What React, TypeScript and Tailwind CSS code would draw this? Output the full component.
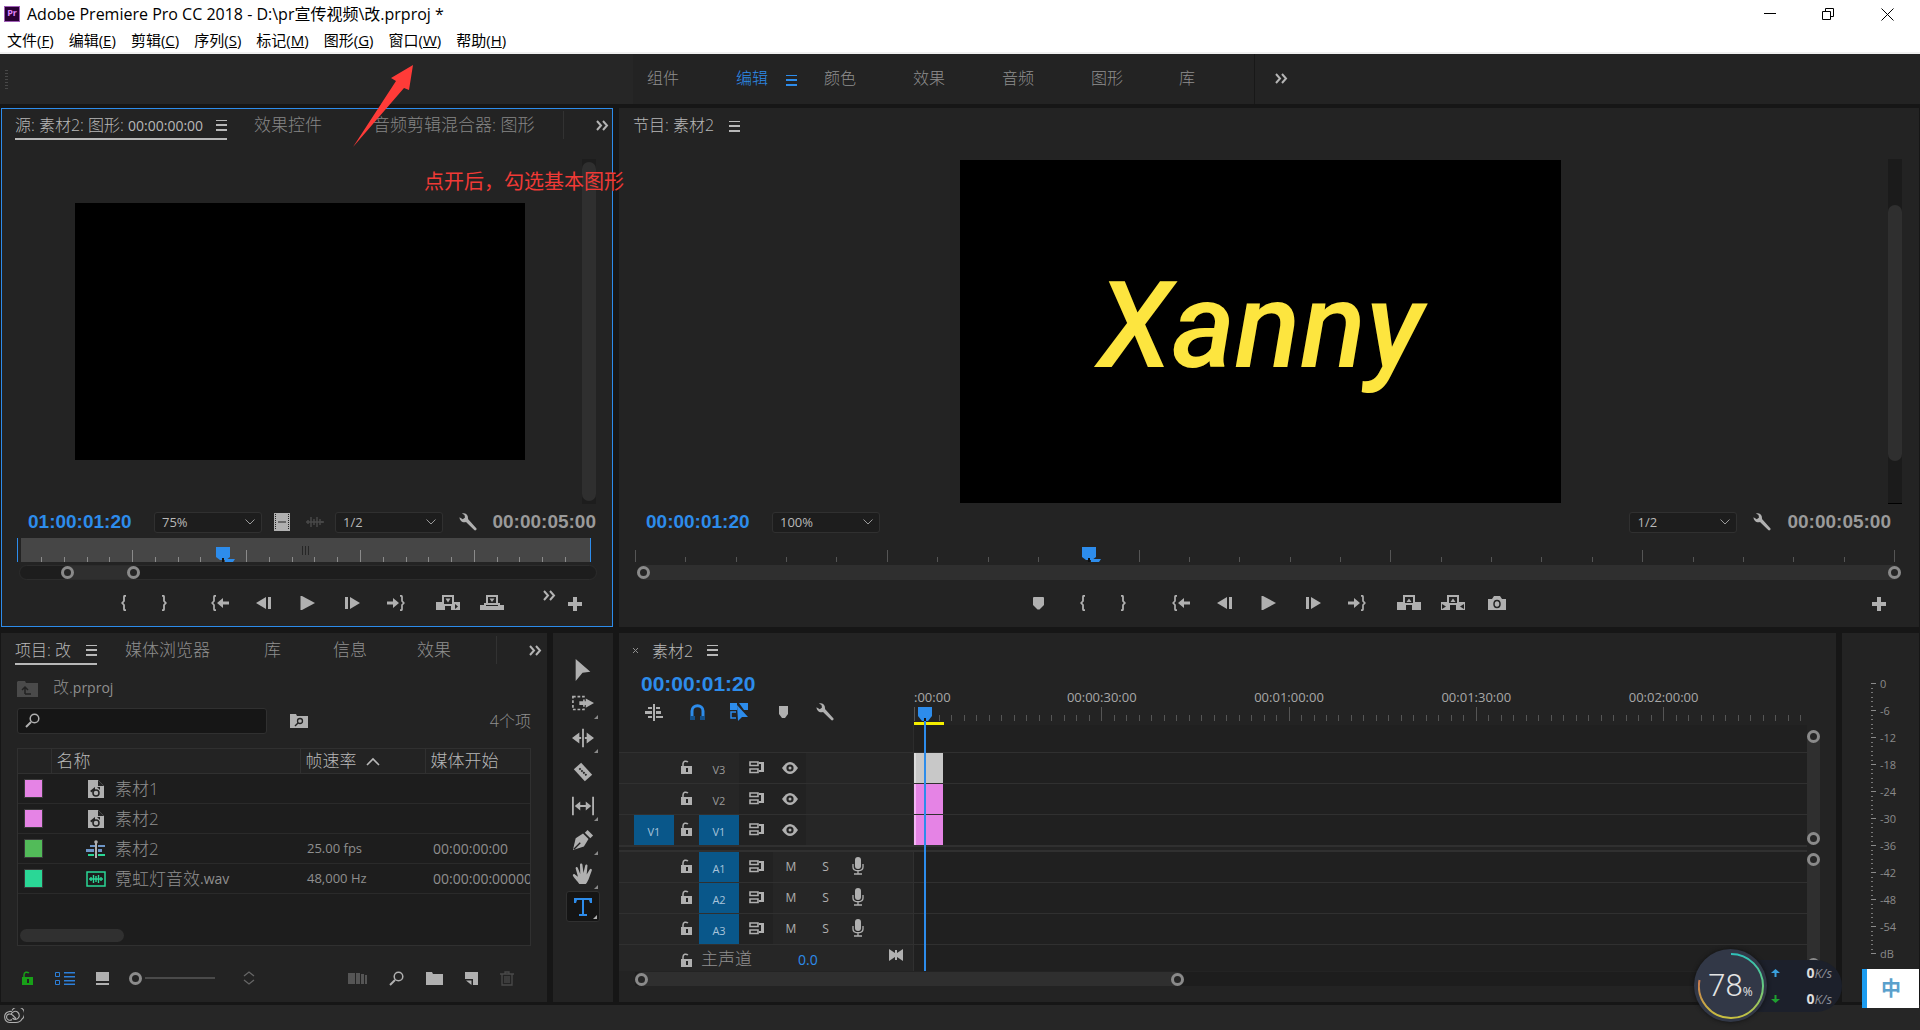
import type { ReactNode } from "react";

type IconProps = { w: number; h: number; className?: string; children: ReactNode };

function Icon({ w, h, className = "", children }: IconProps) {
  return (
    <svg width={w} height={h} viewBox={`0 0 ${w} ${h}`} fill="currentColor" className={`shrink-0 ${className}`} aria-hidden="true">
      {children}
    </svg>
  );
}

const Burger = ({ className = "" }: { className?: string }) => (
  <Icon w={11} h={11} className={className}>
    <path d="M0 0h11v1H0zM0 4h11v2H0zM0 9h11v2H0z" />
  </Icon>
);

const More = () => (
  <Icon w={13} h={11} className="text-[#b4b4b4]">
    <path d="M1 1l4 4.500-4 4.500M7 1l4 4.500-4 4.500" fill="none" stroke="currentColor" strokeWidth="2" />
  </Icon>
);

const Wrench = () => (
  <Icon w={18} h={18}>
    <path d="M3 0.500c3-1 6.500 1 6 5.500l8.500 9.500c.5 1-.9 2.400-2 1.800L7 9C3.500 10 .5 7.500.5 4.200l3.300 2 2.200-1.700L5.500 2z" />
  </Icon>
);

const BraceIn = () => (
  <Icon w={6} h={16}>
    <path d="M5 .8H4q-1 0-1 1V6L1.200 8 3 10v4.200q0 1 1 1h1" fill="none" stroke="currentColor" strokeWidth="1.800" />
  </Icon>
);

const BraceOut = () => (
  <Icon w={6} h={16}>
    <path d="M1 .8h1q1 0 1 1V6l1.800 2L3 10v4.200q0 1-1 1H1" fill="none" stroke="currentColor" strokeWidth="1.800" />
  </Icon>
);

const GoIn = () => (
  <Icon w={18} h={16}>
    <path d="M5 .8H4q-1 0-1 1V6L1.200 8 3 10v4.200q0 1 1 1h1" fill="none" stroke="currentColor" strokeWidth="1.700" />
    <path d="M6 8l6-5v3.500h6v3h-6V13z" />
  </Icon>
);

const GoOut = () => (
  <Icon w={18} h={16}>
    <path d="M13 .8h1q1 0 1 1V6l1.800 2L15 10v4.200q0 1-1 1h-1" fill="none" stroke="currentColor" strokeWidth="1.700" />
    <path d="M12 8L6 3v3.500H0v3h6V13z" />
  </Icon>
);

const StepBack = () => (
  <Icon w={16} h={12}>
    <path d="M0 6l10-6v12zM12 0h3v12h-3z" />
  </Icon>
);

const StepForward = () => (
  <Icon w={16} h={12}>
    <path d="M16 6L6 0v12zM1 0h3v12H1z" />
  </Icon>
);

const Play = () => (
  <Icon w={16} h={14}>
    <path d="M.5 0H2l13 7-13 7H.5z" />
  </Icon>
);

const Insert = () => (
  <Icon w={24} h={16}>
    <path d="M0 7h6V0h12v7h6v8h-9v-4H9v4H0z" />
    <path d="M8 2h8v7H8z" fill="#232323" />
    <path d="M9.500 3.500h5L12 7.500z" />
    <path d="M19 9l3 2.500-3 2.500z" fill="#232323" />
  </Icon>
);

const Overwrite = () => (
  <Icon w={24} h={16}>
    <path d="M0 10h4V8h2V0h12v8h2v2h4v5H0z" />
    <path d="M8 2h8v6H8zM6 10h12v1H6z" fill="#232323" />
    <path d="M9.500 3.500h5L12 7z" />
  </Icon>
);

const Lift = () => (
  <Icon w={24} h={16}>
    <path d="M0 7h6V0h12v7h6v8h-9v-5H9v5H0z" />
    <path d="M8 2h8v6H8z" fill="#232323" />
    <path d="M9.500 7h5L12 3.500z" />
  </Icon>
);

const Extract = () => (
  <Icon w={24} h={16}>
    <path d="M0 7h6V0h12v7h6v8h-9v-5H9v5H0z" />
    <path d="M8 2h8v6H8zM1 9l4 2.500L1 14zM23 9l-4 2.500 4 2.500z" fill="#232323" />
    <path d="M9.500 7h5L12 3.500z" />
  </Icon>
);

const Camera = () => (
  <Icon w={18} h={14}>
    <path d="M0 3h4l2-3h6l2 3h4v11H0z" />
    <ellipse cx="9" cy="8" rx="3" ry="3.500" fill="none" stroke="#232323" strokeWidth="1.500" />
  </Icon>
);

const Plus = () => (
  <Icon w={14} h={14}>
    <path d="M5 0h4v5h5v4H9v5H5V9H0V5h5z" />
  </Icon>
);

const Marker = () => (
  <Icon w={11} h={13}>
    <path d="M0 1q0-1 1-1h9q1 0 1 1v7l-4.500 4.500h-2L0 8z" />
  </Icon>
);

const Lock = () => (
  <Icon w={12} h={14}>
    <path d="M1 6h11v8H1z" />
    <path d="M3 7V4c0-3 3-3.500 5-2" fill="none" stroke="currentColor" strokeWidth="1.500" />
    <path d="M6 8h2v4H6z" fill="#232323" />
  </Icon>
);

const SyncLock = () => (
  <Icon w={16} h={13}>
    <path d="M1 1h8v3.500H1zM1 8h8v3.500H1z" fill="none" stroke="currentColor" strokeWidth="1.600" />
    <path d="M10 2h3v8h-3" fill="none" stroke="currentColor" strokeWidth="2" />
    <path d="M13 1h2v10h-2z" />
  </Icon>
);

const Eye = () => (
  <Icon w={16} h={12}>
    <path d="M0 6q8-12 16 0-8 12-16 0z" />
    <circle cx="8" cy="6" r="3.600" fill="#232323" />
    <circle cx="8" cy="6" r="1.500" />
  </Icon>
);

const Mic = () => (
  <Icon w={12} h={18}>
    <rect x="3" y="0" width="6" height="12" rx="3" />
    <path d="M1 7v3c0 5 10 5 10 0V7M6 14v2.500M2 17h8" fill="none" stroke="currentColor" strokeWidth="1.300" />
  </Icon>
);

const Magnifier = () => (
  <Icon w={15} h={15}>
    <circle cx="9.500" cy="5.500" r="4.300" fill="none" stroke="currentColor" strokeWidth="1.500" />
    <path d="M6 9l-5 5" stroke="currentColor" strokeWidth="2" />
  </Icon>
);

const Film = () => (
  <Icon w={16} h={18}>
    <path d="M0 0h16v18H0z" />
    <path d="M1.500 1v16M14.500 1v16" stroke="#232323" strokeWidth="1" strokeDasharray="1 1" />
    <path d="M4 8.500h8v1H4z" fill="#232323" />
  </Icon>
);

const Wave = () => (
  <Icon w={18} h={12} className="text-[#4a4a4a]">
    <path d="M0 6h18M2 4v4M5 1v10M8 3v6M11 1v10M14 3v6M16 5v2" stroke="currentColor" strokeWidth="1.400" />
  </Icon>
);

function ToolButton({ label, className = "", children }: { label: string; className?: string; children: ReactNode }) {
  return (
    <button type="button" aria-label={label} className={`flex shrink-0 items-center justify-center ${className}`}>
      {children}
    </button>
  );
}

function Dropdown({ label, value }: { label: string; value: string }) {
  return (
    <span className="relative inline-flex">
      <select
        aria-label={label}
        defaultValue={value}
        className="h-[21px] w-[108px] appearance-none rounded-[3px] border border-[#303030] bg-[#1d1d1d] pl-[7px] text-[13px] leading-4 text-[#b8b8b8]"
      >
        <option>{value}</option>
      </select>
      <Icon w={10} h={6} className="pointer-events-none absolute top-[7px] right-[7px] text-[#9a9a9a]">
        <path d="M0.500 .5L5 5 9.500 .5" fill="none" stroke="currentColor" />
      </Icon>
    </span>
  );
}

function Ring() {
  return <span className="block size-[13px] shrink-0 rounded-full border-[3px] border-[#8a8a8a] bg-[#262626]" />;
}

function Playhead({ className = "" }: { className?: string }) {
  return (
    <Icon w={20} h={15} className={`absolute text-[#2d8ceb] ${className}`}>
      <path d="M0 0h14v10l-4 3H4l-4-3z" />
      <path d="M9 12h10l-2 3H9z" />
      <path d="M6 11h2v4H6z" fill="#111" />
    </Icon>
  );
}

function Ticks({ count, first, every, color }: { count: number; first: number; every: number; color: string }) {
  return (
    <div className="flex h-full items-end justify-between">
      {Array.from({ length: count }, (_, i) => (
        <span key={i} className={`w-px ${color} ${(i - first) % every === 0 ? "h-3" : "h-[5px]"}`} />
      ))}
    </div>
  );
}

const menus = [
  ["文件", "F"],
  ["编辑", "E"],
  ["剪辑", "C"],
  ["序列", "S"],
  ["标记", "M"],
  ["图形", "G"],
  ["窗口", "W"],
  ["帮助", "H"],
];

function TitleBar() {
  return (
    <header className="border-b-2 border-[#f0f0f0] bg-white text-black">
      <div className="flex h-[28px] items-center pl-1">
        <span className="flex h-4 w-4 items-start justify-center border border-[#a05fb8] bg-[#2a0034] text-[9px] leading-3 font-bold text-[#e085ff]">
          Pr
        </span>
        <h1 className="ml-[7px] flex-1 text-[16px] leading-6">Adobe Premiere Pro CC 2018 - D:\pr宣传视频\改.prproj *</h1>
        <ToolButton label="最小化" className="h-7 w-[58px]">
          <Icon w={12} h={12}>
            <path d="M0 5h12v1H0z" />
          </Icon>
        </ToolButton>
        <ToolButton label="还原" className="h-7 w-[58px]">
          <Icon w={12} h={12}>
            <path d="M.5 3.500h8v8h-8zM3.500 3V.5h8v8H9" fill="none" stroke="currentColor" />
          </Icon>
        </ToolButton>
        <ToolButton label="关闭" className="mr-[3px] h-7 w-[60px]">
          <Icon w={13} h={13}>
            <path d="M.5 .5l12 12M12.500 .5l-12 12" stroke="currentColor" />
          </Icon>
        </ToolButton>
      </div>
      <nav className="flex h-6 items-start gap-[15px] pl-[7px] text-[15px] leading-6">
        {menus.map(([name, key]) => (
          <button type="button" key={key}>
            {name}(<u>{key}</u>)
          </button>
        ))}
      </nav>
    </header>
  );
}

function WorkspaceBar() {
  return (
    <nav className="flex h-[50px] shrink-0 items-center bg-[#262626] text-[16px] font-light text-[#8f8f8f]">
      <span className="ml-[5px] h-[19px] w-[3px] bg-[repeating-linear-gradient(#484848_0_1px,transparent_1px_3px)]" />
      <div className="ml-[625px] flex h-full flex-1 items-center bg-[#232323]">
        <div className="flex pb-[2px] pl-[14px] leading-6">
          <button type="button" className="w-[89px] text-left">组件</button>
          <button type="button" className="flex w-[88px] items-center gap-[18px] text-left text-[#2d8ceb]">
            编辑
            <Burger className="mt-1" />
          </button>
          <button type="button" className="w-[89px] text-left">颜色</button>
          <button type="button" className="w-[89px] text-left">效果</button>
          <button type="button" className="w-[89px] text-left">音频</button>
          <button type="button" className="w-[88px] text-left">图形</button>
          <button type="button" className="w-[75px] text-left">库</button>
        </div>
        <span className="h-full w-px bg-[#181818]" />
        <ToolButton label="更多" className="w-[52px] pb-[2px]">
          <More />
        </ToolButton>
      </div>
    </nav>
  );
}

function SourcePanel() {
  return (
    <section className="flex w-[612px] shrink-0 flex-col border border-[#2d8ceb] bg-[#232323] text-[#b0b0b0]">
      <div className="flex h-[34px] shrink-0 items-start pl-[13px] text-[17px] leading-6 font-light">
        <button type="button" className="mt-[3px] flex h-[28px] w-[212px] items-center justify-between border-b-2 border-[#b8b8b8] text-[16px] text-[#b8b8b8]">
          <span>
            源: 素材2: 图形: <span className="text-[14px] font-normal">00:00:00:00</span>
          </span>
          <Burger />
        </button>
        <button type="button" className="mt-1 ml-[27px] text-[#868686]">效果控件</button>
        <button type="button" className="mt-1 ml-[51px] w-[190px] text-left text-[#868686]">音频剪辑混合器: 图形</button>
        <span className="mt-[2px] h-[28px] w-px bg-[#323232]" />
        <ToolButton label="更多" className="mt-[11px] ml-8">
          <More />
        </ToolButton>
      </div>
      <div className="flex min-h-0 flex-1 pt-4 pr-4 pl-[15px]">
        <div className="flex flex-1 items-center justify-center">
          <div className="h-[257px] w-[450px] bg-black" />
        </div>
        <div className="w-[14px] bg-[#1d1d1d] py-[3px]">
          <div className="h-full rounded-full bg-[#2f2f2f]" />
        </div>
      </div>
      <div className="flex h-[34px] shrink-0 items-center pt-[2px] pr-4 pl-[26px]">
        <span className="w-[126px] font-['Liberation_Sans',sans-serif] text-[19px] leading-6 font-bold text-[#2d8ceb]">01:00:01:20</span>
        <Dropdown label="选择缩放级别" value="75%" />
        <span className="ml-3 flex items-center gap-4">
          <Film />
          <Wave />
        </span>
        <span className="ml-[11px] flex flex-1 items-center gap-4">
          <Dropdown label="选择回放分辨率" value="1/2" />
          <Wrench />
        </span>
        <span className="font-['Liberation_Sans',sans-serif] text-[19px] leading-6 font-bold text-[#9a9a9a]">00:00:05:00</span>
      </div>
      <div className="relative mr-[21px] ml-[15px] h-6 shrink-0 border-x border-[#2d8ceb] pl-[3px]">
        <div className="h-full bg-[#464646] pr-6 pl-5">
          <Ticks count={24} first={4} every={5} color="bg-[#8a8a8a]" />
        </div>
        <span className="absolute top-2 left-[284px] flex h-[9px] w-[7px] justify-between border-x border-[#262626]">
          <span className="ml-[2px] w-px bg-[#262626]" />
        </span>
        <Playhead className="bottom-0 left-[198px]" />
      </div>
      <div className="mt-[3px] mr-[15px] ml-[17px] h-[15px] shrink-0 rounded-full border border-[#2c2c2c] bg-[#1d1d1d] pl-[41px]">
        <div className="flex w-[79px] justify-between rounded-full bg-[#2f2f2f]">
          <Ring />
          <Ring />
        </div>
      </div>
      <div className="grid h-[46px] shrink-0 grid-cols-[1fr_auto_1fr] items-center">
        <span />
        <div className="flex items-center pl-[3px]">
          <ToolButton label="标记入点" className="h-8 w-10"><BraceIn /></ToolButton>
          <ToolButton label="标记出点" className="mr-[14px] h-8 w-10"><BraceOut /></ToolButton>
          <ToolButton label="转到入点" className="h-8 w-11"><GoIn /></ToolButton>
          <ToolButton label="后退一帧" className="h-8 w-11"><StepBack /></ToolButton>
          <ToolButton label="播放" className="h-8 w-11"><Play /></ToolButton>
          <ToolButton label="前进一帧" className="h-8 w-11"><StepForward /></ToolButton>
          <ToolButton label="转到出点" className="mr-2 h-8 w-11"><GoOut /></ToolButton>
          <ToolButton label="插入" className="h-8 w-11"><Insert /></ToolButton>
          <ToolButton label="覆盖" className="h-8 w-11"><Overwrite /></ToolButton>
        </div>
        <div className="flex items-center gap-3 justify-self-end pr-[30px]">
          <ToolButton label="更多" className="pb-4"><More /></ToolButton>
          <ToolButton label="按钮编辑器" className="pt-[2px]"><Plus /></ToolButton>
        </div>
      </div>
    </section>
  );
}

function ProgramPanel() {
  return (
    <section className="flex min-w-0 flex-1 flex-col border-y border-[#232323] bg-[#232323] text-[#b0b0b0]">
      <div className="flex h-[34px] shrink-0 items-center pb-[2px] pl-[14px] text-[16px] leading-6 font-light text-[#b8b8b8]">
        <span className="mr-[15px]">节目: 素材2</span>
        <Burger className="mt-[2px]" />
      </div>
      <div className="flex min-h-0 flex-1 pt-4 pr-[17px] pl-[14px]">
        <div className="flex flex-1 items-center justify-center">
          <div className="flex h-[343px] w-[601px] items-center justify-center bg-black">
            <span className="pb-3 font-['Roboto',sans-serif] text-[121px] leading-[120px] font-medium text-[#fde53f] italic">Xanny</span>
          </div>
        </div>
        <div className="w-[14px] border-b border-black bg-[#1b1b1b] pt-[46px]">
          <div className="h-[256px] rounded-full bg-[#2f2f2f]" />
        </div>
      </div>
      <div className="flex h-[34px] shrink-0 items-center pt-[2px] pr-[28px] pl-[27px]">
        <span className="w-[126px] font-['Liberation_Sans',sans-serif] text-[19px] leading-6 font-bold text-[#2d8ceb]">00:00:01:20</span>
        <Dropdown label="选择缩放级别" value="100%" />
        <span className="mr-4 flex flex-1 items-center justify-end gap-4">
          <Dropdown label="选择回放分辨率" value="1/2" />
          <Wrench />
        </span>
        <span className="font-['Liberation_Sans',sans-serif] text-[19px] leading-6 font-bold text-[#9a9a9a]">00:00:05:00</span>
      </div>
      <div className="relative mr-[24px] ml-4 h-6 shrink-0">
        <Ticks count={26} first={0} every={5} color="bg-[#555]" />
        <Playhead className="bottom-0 left-[447px]" />
      </div>
      <div className="mt-[3px] mr-[18px] ml-[18px] flex h-[15px] shrink-0 items-center justify-between rounded-full bg-[#2f2f2f]">
        <Ring />
        <Ring />
      </div>
      <div className="grid h-[46px] shrink-0 grid-cols-[1fr_auto_1fr] items-center">
        <span />
        <div className="flex items-center pr-[5px]">
          <ToolButton label="添加标记" className="h-8 w-12"><Marker /></ToolButton>
          <ToolButton label="标记入点" className="h-8 w-10"><BraceIn /></ToolButton>
          <ToolButton label="标记出点" className="mr-4 h-8 w-10"><BraceOut /></ToolButton>
          <ToolButton label="转到入点" className="h-8 w-11"><GoIn /></ToolButton>
          <ToolButton label="后退一帧" className="h-8 w-11"><StepBack /></ToolButton>
          <ToolButton label="播放" className="h-8 w-11"><Play /></ToolButton>
          <ToolButton label="前进一帧" className="h-8 w-11"><StepForward /></ToolButton>
          <ToolButton label="转到出点" className="mr-2 h-8 w-11"><GoOut /></ToolButton>
          <ToolButton label="提升" className="h-8 w-11"><Lift /></ToolButton>
          <ToolButton label="提取" className="h-8 w-11"><Extract /></ToolButton>
          <ToolButton label="导出帧" className="h-8 w-11"><Camera /></ToolButton>
        </div>
        <div className="justify-self-end pt-[2px] pr-[33px]">
          <ToolButton label="按钮编辑器"><Plus /></ToolButton>
        </div>
      </div>
    </section>
  );
}

const GraphicFile = () => (
  <Icon w={16} h={18}>
    <path d="M0 0h10l6 6v12H0z" />
    <path d="M10 0v6h6" fill="#232323" />
    <path d="M2 11l5-4v3l-3 2 2 2z" fill="#232323" />
    <circle cx="8" cy="13" r="3" fill="none" stroke="#232323" strokeWidth="1.500" />
    <path d="M9 7h3v3z" fill="#232323" />
  </Icon>
);

const SequenceFile = () => (
  <Icon w={20} h={18}>
    <path d="M4 5h5v2H4zM12 5h7v2h-7zM0 9h8v3H0zM12 9h4v3h-4z" fill="#6f96c8" />
    <path d="M2 14h6v2H2zM12 14h7v2h-7z" fill="#2ad796" />
    <path d="M9 2h2v16H9z" />
    <circle cx="10" cy="2" r="1.800" />
  </Icon>
);

const AudioFile = () => (
  <Icon w={20} h={16} className="text-[#2ad796]">
    <path d="M1 1h18v14H1z" fill="none" stroke="currentColor" strokeWidth="1.500" />
    <path d="M3 8h14M5 6v4M7.500 4v8M10 5v6M12.500 4v8M15 6v4" stroke="currentColor" strokeWidth="1.400" />
  </Icon>
);

const clips = [
  { color: "bg-[#e583e5]", icon: <GraphicFile />, name: "素材1", ext: "", rate: "", start: "" },
  { color: "bg-[#e583e5]", icon: <GraphicFile />, name: "素材2", ext: "", rate: "", start: "" },
  { color: "bg-[#52bb59]", icon: <SequenceFile />, name: "素材2", ext: "", rate: "25.00 fps", start: "00:00:00:00" },
  { color: "bg-[#2ad796]", icon: <AudioFile />, name: "霓虹灯音效", ext: ".wav", rate: "48,000 Hz", start: "00:00:00:00000" },
];

function ProjectPanel() {
  return (
    <section className="flex w-[546px] shrink-0 flex-col bg-[#232323] text-[#8f8f8f]">
      <div className="flex h-[36px] shrink-0 items-start pl-[14px] text-[17px] leading-6 font-light">
        <button type="button" className="mt-1 flex h-[28px] w-[82px] items-center justify-between border-b-2 border-[#b8b8b8] text-[16px] text-[#b8b8b8]">
          项目: 改
          <Burger />
        </button>
        <button type="button" className="mt-[5px] ml-7 w-[139px] text-left">媒体浏览器</button>
        <button type="button" className="mt-[5px] w-[69px] text-left">库</button>
        <button type="button" className="mt-[5px] w-[84px] text-left">信息</button>
        <button type="button" className="mt-[5px] w-[79px] text-left">效果</button>
        <span className="mt-[3px] h-[28px] w-px bg-[#323232]" />
        <ToolButton label="更多" className="mt-3 ml-8">
          <More />
        </ToolButton>
      </div>
      <div className="flex h-[39px] shrink-0 items-center gap-[15px] pl-4 text-[16px] leading-6 font-light">
        <Icon w={21} h={16} className="text-[#4a4a4a]">
          <path d="M1 0h7l1 2h12v14H0V1z" />
          <path d="M8 13h6M8 13V7M5 9l3-3 3 3" fill="none" stroke="#222" strokeWidth="1.500" />
        </Icon>
        <span className="pb-[2px]">改.<span className="text-[14px] font-normal">prproj</span></span>
      </div>
      <div className="flex h-[26px] shrink-0 items-center pr-4 pl-4">
        <span className="relative">
          <input
            type="search"
            aria-label="搜索素材箱"
            className="block h-[26px] w-[250px] rounded-[3px] border border-[#303030] bg-[#161616] pl-8 text-[13px]"
          />
          <span className="absolute top-[5px] left-2 text-[#b0b0b0]">
            <Magnifier />
          </span>
        </span>
        <ToolButton label="从查询创建新的搜索素材箱" className="ml-[23px] text-[#b0b0b0]">
          <Icon w={18} h={14}>
            <path d="M0 0h6l1 2h11v12H0z" />
            <circle cx="10" cy="7" r="2.500" fill="none" stroke="#222" strokeWidth="1.300" />
            <path d="M8 9l-3 3" stroke="#222" strokeWidth="1.500" />
          </Icon>
        </ToolButton>
        <span className="flex-1 text-right text-[16px] leading-6 font-light">4个项</span>
      </div>
      <div className="mt-[14px] mr-4 ml-4 flex h-[198px] shrink-0 flex-col overflow-hidden border border-[#303030] bg-[#1d1d1d]">
        <table className="w-full table-fixed border-collapse text-left font-light">
          <thead className="bg-[#232323] text-[17px] text-[#b8b8b8]">
            <tr className="h-6 border-b border-[#303030]">
              <th className="w-[33px] border-r border-[#303030]" aria-label="标签" />
              <th className="w-[249px] border-r border-[#303030] pl-[5px] leading-6 font-light">名称</th>
              <th className="w-[125px] border-r border-[#303030] pl-[5px] leading-6 font-light">
                <span className="flex items-center gap-[9px]">
                  帧速率
                  <Icon w={14} h={9}>
                    <path d="M1 8l6-6 6 6" fill="none" stroke="currentColor" strokeWidth="1.600" />
                  </Icon>
                </span>
              </th>
              <th className="pl-[5px] leading-6 font-light">媒体开始</th>
            </tr>
          </thead>
          <tbody className="text-[13px]">
            {clips.map((c, i) => (
              <tr key={i} className="h-[30px] border-b border-[#2a2a2a]">
                <td className="pl-[6px]">
                  <span className={`block size-[19px] border border-[#3a3a3a] ${c.color}`} />
                </td>
                <td className="pl-[34px]">
                  <span className="flex items-center leading-6">
                    <span className="mr-[9px] flex w-[21px] justify-center text-[#b0b0b0]">{c.icon}</span>
                    <span className="text-[17px]">{c.name}</span>
                    <span className="text-[14px] font-normal">{c.ext}</span>
                  </span>
                </td>
                <td className="pl-[7px] font-normal">{c.rate}</td>
                <td className="overflow-hidden pl-2 text-[14px] font-normal whitespace-nowrap">{c.start}</td>
              </tr>
            ))}
          </tbody>
        </table>
        <div className="mt-auto mb-[3px] ml-[2px] h-[13px] w-[104px] rounded-full bg-[#303030]" />
      </div>
      <div className="flex flex-1 items-center pt-2 pl-5 text-[#b0b0b0]">
        <ToolButton label="可写" className="w-[34px] justify-start! text-[#18a018]"><Lock /></ToolButton>
        <ToolButton label="列表视图" className="w-[41px] justify-start! text-[#2d7fd8]">
          <Icon w={20} h={13}>
            <path d="M.5 .5h4v4h-4zM.5 8.500h4v4h-4z" fill="none" stroke="currentColor" />
            <path d="M9 0h11v1.500H9zM9 4h11v1.500H9zM9 8h11v1.500H9zM9 11.500h11V13H9z" />
          </Icon>
        </ToolButton>
        <ToolButton label="图标视图">
          <Icon w={13} h={13}>
            <path d="M0 0h13v9H0zM0 11h13v2H0z" />
          </Icon>
        </ToolButton>
        <input
          type="range"
          aria-label="缩放"
          defaultValue={0}
          className="ml-5 h-3 w-[86px] appearance-none bg-[linear-gradient(#4a4a4a,#4a4a4a)] bg-[length:70px_2px] bg-right bg-no-repeat [&::-webkit-slider-thumb]:size-[13px] [&::-webkit-slider-thumb]:appearance-none [&::-webkit-slider-thumb]:rounded-full [&::-webkit-slider-thumb]:border-[3px] [&::-webkit-slider-thumb]:border-[#8c8c8c] [&::-webkit-slider-thumb]:bg-[#232323]"
        />
        <ToolButton label="排序图标" className="ml-7 text-[#666]">
          <Icon w={12} h={14}>
            <path d="M1 5l5-4 5 4M1 9l5 4 5-4" fill="none" stroke="currentColor" strokeWidth="1.300" />
          </Icon>
        </ToolButton>
        <div className="flex flex-1 items-center justify-end gap-[22px] pr-[33px]">
          <ToolButton label="自动匹配序列" className="text-[#555]">
            <Icon w={19} h={11}>
              <path d="M0 0h7v11H0zM8 0h4v11H8zM13 1h3v10h-3zM17 2h2v9h-2z" />
            </Icon>
          </ToolButton>
          <ToolButton label="查找"><Magnifier /></ToolButton>
          <ToolButton label="新建素材箱">
            <Icon w={17} h={13}>
              <path d="M0 0h6l1 2h10v11H0z" />
            </Icon>
          </ToolButton>
          <ToolButton label="新建项">
            <Icon w={13} h={13}>
              <path d="M0 0h13v13H8V7H0z" />
              <path d="M1 8.500h5.500V13z" />
            </Icon>
          </ToolButton>
          <ToolButton label="清除" className="text-[#4a4a4a]">
            <Icon w={14} h={15}>
              <path d="M0 3h14M5 3V1h4v2M2 3v11h10V3M5 5v7M7 5v7M9 5v7" fill="none" stroke="currentColor" strokeWidth="1.300" />
            </Icon>
          </ToolButton>
        </div>
      </div>
    </section>
  );
}

const tools = [
  { label: "选择工具", icon: <path d="M4 0l16 14-8.500 1L4 24z" /> },
  {
    label: "向前选择轨道工具",
    icon: (
      <>
        <path d="M1 4h12v14H1z" fill="none" stroke="currentColor" strokeWidth="1.800" strokeDasharray="3 2" />
        <path d="M8 9h7V6l9 5-9 5v-3H8z" />
      </>
    ),
  },
  { label: "波纹编辑工具", icon: <path d="M11 2h2v20h-2zM0 12l8-6v5h2v2H8v5zM24 12l-8-6v5h-2v2h2v5z" /> },
  {
    label: "剃刀工具",
    icon: (
      <>
        <path d="M2 9l8-7 12 13-8 7z" />
        <path d="M8 8l8 8" stroke="#232323" strokeWidth="2" strokeDasharray="2 1" />
      </>
    ),
  },
  { label: "外滑工具", icon: <path d="M0 2h2v20H0zM22 2h2v20h-2zM3 12l6-5v4h6V7l6 5-6 5v-4H9v4z" /> },
  {
    label: "钢笔工具",
    icon: (
      <>
        <path d="M1 23l3-13 8-5 6 6-5 8z" />
        <path d="M14 4l3-3 6 6-3 3z" />
        <path d="M2 22l7-7" stroke="#232323" strokeWidth="1.500" />
      </>
    ),
  },
  {
    label: "手形工具",
    icon: (
      <path d="M8 23c-2-3-6-7-7-9-.5-1.500 1-2.500 2.200-1.500L6.500 15 4 6C3.700 4.300 5.800 3.800 6.400 5.500L9 12 8.700 2c0-1.800 2.500-1.800 2.700 0L12.500 11l2-8.500c.5-1.600 2.700-1 2.400.6L16 12.500l3.300-5.500c1-1.500 2.800-.5 2.300 1.200L18 18c-1 2-2 4-3 5z" />
    ),
  },
];

function ToolsPanel() {
  return (
    <section className="flex w-[60px] shrink-0 flex-col items-center bg-[#232323] pt-5 text-[#b0b0b0]">
      {tools.map((t, i) => (
        <ToolButton key={t.label} label={t.label} className="relative h-[34px] w-[34px]">
          <Icon w={24} h={24} className="size-[22px]">
            {t.icon}
          </Icon>
          {i !== 0 && i !== 3 && (
            <Icon w={4} h={4} className="absolute right-[2px] bottom-[2px] text-[#8a8a8a]">
              <path d="M4 0v4H0z" />
            </Icon>
          )}
        </ToolButton>
      ))}
      <ToolButton label="文字工具" className="relative h-[31px] w-[34px] rounded-[3px] border border-[#303030] bg-[#151515] text-[#2d8ceb]">
        <Icon w={18} h={18}>
          <path d="M0 0h18v5h-2l-1-3h-5v14h3v2H5v-2h3V2H3L2 5H0z" />
        </Icon>
        <Icon w={4} h={4} className="absolute right-[2px] bottom-[2px] text-[#b0b0b0]">
          <path d="M4 0v4H0z" />
        </Icon>
      </ToolButton>
    </section>
  );
}

const videoTracks = [
  { name: "V3", active: false, clip: "border-l-2 border-[#dcdcdc] bg-[#c8c8c8]" },
  { name: "V2", active: false, clip: "border-l-2 border-[#f5b5f5] bg-[#e583e5]" },
  { name: "V1", active: true, clip: "border-l-2 border-[#f5b5f5] bg-[#e583e5]" },
];

const audioTracks = ["A1", "A2", "A3"];

const timeLabels = ["", "00:00:30:00", "00:01:00:00", "00:01:30:00", "00:02:00:00"];

function TimeRuler() {
  return (
    <div className="relative mr-[6px] flex h-full items-end justify-between pb-1">
      {Array.from({ length: 72 }, (_, i) => (
        <span key={i} className={`relative w-px bg-[#555] ${i % 15 === 0 ? "h-[14px]" : "h-[6px]"}`}>
          {i > 0 && i % 15 === 0 && (
            <span className="absolute bottom-4 left-1/2 -translate-x-1/2 text-[13px] leading-4 text-[#a8a8a8]">{timeLabels[i / 15]}</span>
          )}
        </span>
      ))}
      <span className="absolute bottom-5 left-0 text-[13px] leading-4 text-[#a8a8a8]">:00:00</span>
      <span className="absolute bottom-0 left-0 h-[3px] w-[30px] bg-[#f5ee00]" />
      <Icon w={14} h={15} className="absolute bottom-[3px] left-1 text-[#2d8ceb]">
        <path d="M0 0h14v9l-4 5H4L0 9z" />
        <path d="M6 11h2v4H6z" fill="#111" />
      </Icon>
    </div>
  );
}

function TrackLabel({ name, active }: { name: string; active: boolean }) {
  return (
    <button
      type="button"
      className={`ml-[7px] h-full w-10 shrink-0 pt-1 text-center text-[11px] leading-4 ${active ? "bg-[#09578a] text-[#a8c4da]" : "text-[#9a9a9a]"}`}
    >
      {name}
    </button>
  );
}

function TimelinePanel() {
  return (
    <section className="flex min-w-0 flex-1 flex-col bg-[#232323] text-[#b0b0b0]">
      <div className="flex h-[35px] shrink-0 items-center pl-[13px] text-[16px] leading-6 font-light text-[#b8b8b8]">
        <ToolButton label="关闭序列" className="mr-[13px] text-[#8f8f8f]">
          <Icon w={7} h={7}>
            <path d="M1 1l5 5M6 1L1 6" stroke="currentColor" />
          </Icon>
        </ToolButton>
        <span className="mr-[14px]">素材2</span>
        <Burger />
      </div>
      <div className="flex h-[57px] shrink-0 pr-7">
        <div className="w-[295px] shrink-0 pt-1 pl-[22px]">
          <div className="font-['Liberation_Sans',sans-serif] text-[21px] leading-6 font-bold text-[#2d8ceb]">00:00:01:20</div>
          <div className="mt-[6px] flex h-5 items-center">
            <ToolButton label="嵌套序列" className="mr-[27px] ml-1">
              <Icon w={18} h={18}>
                <path d="M3 4h4v2H3zM11 4h4v2h-4zM0 8h7v3H0zM11 8h5v3h-5zM3 13h4v2H3zM11 13h7v2h-7z" />
                <path d="M8 1h2v17H8z" />
              </Icon>
            </ToolButton>
            <ToolButton label="对齐" className="mr-[25px] text-[#2d8ceb]">
              <Icon w={15} h={17}>
                <path d="M2 16V7c0-7 11-7 11 0v9" fill="none" stroke="currentColor" strokeWidth="3" />
                <path d="M0 12h5v4H0zM10 12h5v4h-5z" fill="#14508a" />
              </Icon>
            </ToolButton>
            <ToolButton label="链接选择项" className="mr-[31px] text-[#2d8ceb]">
              <Icon w={18} h={18}>
                <path d="M0 0h7v7H0zM9 0h9v7h-4z" />
                <path d="M6 9H1v6h5" fill="none" stroke="currentColor" strokeWidth="1.500" />
                <path d="M7 2l11 12h-6l-4 4z" />
              </Icon>
            </ToolButton>
            <ToolButton label="添加标记" className="mr-7">
              <Icon w={9} h={12}>
                <path d="M0 0h9v8l-3 4H3L0 8z" />
              </Icon>
            </ToolButton>
            <ToolButton label="时间轴显示设置"><Wrench /></ToolButton>
          </div>
        </div>
        <div className="min-w-0 flex-1">
          <TimeRuler />
        </div>
      </div>
      <div className="flex h-[246px] shrink-0 pr-4">
        <div className="relative min-w-0 flex-1">
          <div className="flex h-7 border-b border-[#303030]">
            <div className="w-[295px] border-r border-[#2c2c2c]" />
            <div className="flex-1 bg-[#202020]" />
          </div>
          {videoTracks.map((t) => (
            <div key={t.name} className={`flex border-[#303030] ${t.active ? "h-[30px]" : "h-[31px] border-b"}`}>
              <div className="flex w-[295px] shrink-0 border-r border-[#303030] bg-[#262626]">
                {t.active ? (
                  <button type="button" className="ml-[15px] h-full w-10 bg-[#09578a] pt-1 text-center text-[11px] leading-4 text-[#a8c4da]">V1</button>
                ) : (
                  <span className="w-[55px]" />
                )}
                <ToolButton label={`锁定 ${t.name}`} className="ml-[6px] h-7"><Lock /></ToolButton>
                <TrackLabel name={t.name} active={t.active} />
                <div className="flex h-full w-[67px] items-center bg-[#222] pl-[10px]">
                  <ToolButton label={`同步锁定 ${t.name}`} className="pb-[2px]"><SyncLock /></ToolButton>
                  <ToolButton label={`切换轨道输出 ${t.name}`} className="ml-[17px]"><Eye /></ToolButton>
                </div>
              </div>
              <div className="flex-1 bg-[#202020]">
                <div className={`h-full w-[29px] ${t.clip}`} />
              </div>
            </div>
          ))}
          <div className="h-[7px] border-y-2 border-[#303030]" />
          {audioTracks.map((name) => (
            <div key={name} className="flex h-[31px] border-b border-[#303030]">
              <div className="flex w-[295px] shrink-0 border-r border-[#303030] bg-[#262626]">
                <span className="w-[55px]" />
                <ToolButton label={`锁定 ${name}`} className="ml-[6px] h-7"><Lock /></ToolButton>
                <TrackLabel name={name} active />
                <div className="flex h-full w-[34px] items-center bg-[#222] pl-[10px]">
                  <ToolButton label={`同步锁定 ${name}`} className="pb-[2px]"><SyncLock /></ToolButton>
                </div>
                <button type="button" className="w-[35px] pl-px text-[12px] leading-4">M</button>
                <button type="button" className="w-[35px] text-[12px] leading-4">S</button>
                <ToolButton label={`画外音录制 ${name}`} className="ml-[9px] pb-[2px]"><Mic /></ToolButton>
              </div>
              <div className="flex-1 bg-[#202020]" />
            </div>
          ))}
          <div className="flex h-[26px]">
            <div className="flex w-[295px] shrink-0 items-center border-r border-[#303030] bg-[#262626] pr-[10px] pl-[61px]">
              <ToolButton label="锁定主声道" className="pt-1"><Lock /></ToolButton>
              <span className="ml-[9px] w-[97px] pt-px text-[17px] leading-6 font-light text-[#8f8f8f]">主声道</span>
              <span className="flex-1 pt-1 text-[14px] leading-4 text-[#2d8ceb]">0.0</span>
              <ToolButton label="折叠轨道" className="pb-[6px]">
                <Icon w={14} h={12}>
                  <path d="M0 0l6 4V1h2v3l6-4v12L8 8v3H6V8l-6 4z" />
                </Icon>
              </ToolButton>
            </div>
            <div className="flex-1 bg-[#202020]" />
          </div>
          <span className="absolute -top-1 bottom-0 left-[305px] w-[2px] bg-[#2d8ceb]" />
        </div>
        <div className="flex w-[13px] shrink-0 flex-col gap-2 pt-[5px]">
          <div className="flex h-[115px] flex-col justify-between rounded-full bg-[#2f2f2f]">
            <Ring />
            <Ring />
          </div>
          <div className="flex flex-1 flex-col justify-between rounded-full bg-[#2f2f2f]">
            <Ring />
            <Ring />
          </div>
        </div>
      </div>
      <div className="mt-px mr-7 ml-4 h-[14px] shrink-0 bg-[#1d1d1d]">
        <div className="flex h-full w-[549px] items-center justify-between rounded-full bg-[#2f2f2f]">
          <Ring />
          <Ring />
        </div>
      </div>
    </section>
  );
}

const levels = ["0", "-6", "-12", "-18", "-24", "-30", "-36", "-42", "-48", "-54", "dB"];

function MetersPanel() {
  return (
    <section className="flex w-[77px] shrink-0 bg-[#232323] pt-[37px] pl-[29px]">
      <div className="pt-[13px]">
        {levels.map((l) => (
          <div key={l} className="flex h-[27px] flex-col justify-between">
            <span className="h-px w-[5px] bg-[#8a8a8a]" />
            {l !== "dB" && [1, 2, 3, 4, 5].map((n) => <span key={n} className="h-px w-[2px] bg-[#777]" />)}
            <span />
          </div>
        ))}
      </div>
      <div className="pl-1 text-[11px] text-[#8a8a8a]">
        {levels.map((l) => (
          <div key={l} className="leading-[27px]">{l}</div>
        ))}
      </div>
    </section>
  );
}

function StatusBar() {
  return (
    <footer className="flex h-[25px] shrink-0 items-center bg-[#262626] pb-1 pl-[3px] text-[#b0b0b0]">
      <Icon w={21} h={16}>
        <g fill="none" stroke="currentColor" strokeWidth="1.100">
          <path d="M9 2.500A6.700 6.700 0 1 1 19 11q-2 3.500-6 3.500H6.500A5.500 5.500 0 0 1 5.500 3.800Q7 3 9 3.800" />
          <path d="M13 10.500L9.500 7C7 5 3.500 6 3.500 9s3.500 4 5.500 2.500M8 6.500c1-3.500 5-4 7-2s1.500 5.500-1 6.500-3.500 0-4.500-1" />
        </g>
      </Icon>
    </footer>
  );
}

function SpeedBall() {
  return (
    <div className="absolute right-[78px] bottom-[8px] flex items-center">
      <div className="relative z-10 flex size-[73px] items-center justify-center rounded-full bg-[#323847] text-[#e4e4e4] shadow-[0_0_4px_#111]">
        <Icon w={66} h={66} className="absolute top-1 left-1">
          <defs>
            <linearGradient id="cool" x1="0" y1="0" x2="0" y2="1">
              <stop offset="0" stopColor="#30c0b8" />
              <stop offset="0.500" stopColor="#66cc80" />
              <stop offset="1" stopColor="#c8c040" />
            </linearGradient>
            <linearGradient id="warm" x1="0" y1="0" x2="0" y2="1">
              <stop offset="0" stopColor="#c87850" />
              <stop offset="1" stopColor="#c8c040" />
            </linearGradient>
          </defs>
          <path d="M33 1a32 32 0 0 1 0 64" fill="none" stroke="url(#cool)" strokeWidth="2" />
          <path d="M33 65A32 32 0 0 1 1.500 27" fill="none" stroke="url(#warm)" strokeWidth="2" />
        </Icon>
        <span className="font-['Roboto',sans-serif] text-[31px] leading-8 font-light">78</span>
        <span className="pt-3 text-[12px] leading-4">%</span>
      </div>
      <div className="-ml-9 grid h-[52px] w-[111px] grid-rows-2 rounded-full bg-[#1c202b] pr-[10px] pl-10 text-[#8c8f98]">
        {["text-[#3aa0dc]", "text-[#1fa030]"].map((c, i) => (
          <div key={c} className="flex items-center justify-between">
            <Icon w={9} h={8} className={`${c} ${i ? "rotate-180" : ""}`}>
              <path d="M4.500 0L9 4H5.500v4h-2V4H0z" />
            </Icon>
            <span className="flex items-baseline text-[13px] leading-4 italic">
              <b className="text-[14px] text-[#dcdcdc] not-italic">0</b>K/s
            </span>
          </div>
        ))}
      </div>
    </div>
  );
}

function InputMethod() {
  return (
    <div className="absolute right-px bottom-[22px] flex h-[39px] w-[57px] items-center justify-center border-l-[5px] border-[#1c9cf0] bg-white pr-1 text-[20px] leading-6 font-bold text-[#5aa0cc]">
      中
    </div>
  );
}

export default function App() {
  return (
    <div className="relative flex min-h-screen flex-col overflow-hidden bg-[#161616] font-['Open_Sans','Noto_Sans_CJK_SC',sans-serif]">
      <TitleBar />
      <WorkspaceBar />
      <main className="flex flex-1 flex-col gap-[6px] px-px pt-1 pb-[3px]">
        <div className="flex h-[519px] gap-[6px]">
          <SourcePanel />
          <ProgramPanel />
        </div>
        <div className="flex flex-1 gap-[6px]">
          <ProjectPanel />
          <ToolsPanel />
          <TimelinePanel />
          <MetersPanel />
        </div>
      </main>
      <StatusBar />
      <Icon w={62} h={84} className="absolute top-[64px] left-[352px] text-[#ff3b38]">
        <path d="M61 1L39 14l5 3L1 83 52 24l5 2z" />
      </Icon>
      <p className="absolute top-[168px] left-[424px] text-[20px] leading-7 text-[#f03a36]">点开后，勾选基本图形</p>
      <SpeedBall />
      <InputMethod />
    </div>
  );
}
